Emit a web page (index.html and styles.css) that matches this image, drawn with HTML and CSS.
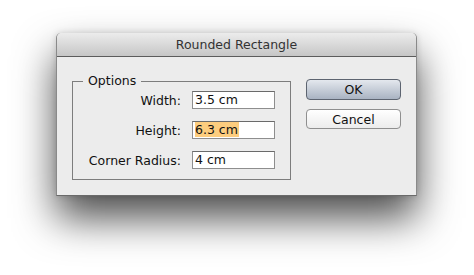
FILE: index.html
```html
<!DOCTYPE html>
<html lang="en">
<head>
    <meta charset="UTF-8">
    <title>Rounded Rectangle</title>
    <link rel="stylesheet" href="styles.css">
</head>
<body>
    <div class="janela">
        <div class="barra-titulo">Rounded Rectangle</div>
        <div class="conteudo">
            <fieldset class="grupo">
                <legend>Options</legend>
                <div class="linha">
                    <label for="largura">Width:</label>
                    <div class="campo" id="largura">3.5 cm</div>
                </div>
                <div class="linha">
                    <label for="altura">Height:</label>
                    <div class="campo" id="altura"><span class="selecao">6.3 cm</span></div>
                </div>
                <div class="linha">
                    <label for="raio">Corner Radius:</label>
                    <div class="campo" id="raio">4 cm</div>
                </div>
            </fieldset>
            <div class="botoes">
                <button class="botao botao-padrao">OK</button>
                <button class="botao">Cancel</button>
            </div>
        </div>
    </div>
</body>
</html>
```

FILE: styles.css
```css
html {
    background-color: #ffffff;
}

body {
    font-family: "DejaVu Sans", sans-serif;
    font-size: 12.5px;
    color: #111;
    margin: 0;
    padding: 33px 0 0 56px;
    min-height: 275px;
    box-sizing: border-box;
}

.janela {
    width: 361px;
    height: 163px;
    box-sizing: border-box;
    background-color: #ececec;
    border: 1px solid #8a8a8a;
    border-top: none;
    border-bottom-color: #6a6a6a;
    border-radius: 5px 5px 0 0;
    box-shadow: 0 22px 40px rgba(0, 0, 0, 0.7), 0 0 6px rgba(0, 0, 0, 0.15);
}

.barra-titulo {
    height: 24px;
    box-sizing: border-box;
    background: linear-gradient(#ececec, #c6c6c6);
    border-bottom: 1px solid #5c5c5c;
    border-radius: 5px 5px 0 0;
    text-align: center;
    line-height: 23px;
    color: #333;
    font-size: 12.5px;
}

.conteudo {
    display: flex;
    padding: 0 0 0 15px;
}

.grupo {
    width: 219px;
    box-sizing: border-box;
    margin: 17px 0 0 0;
    padding: 3px 0 10px 0;
    border: 1px solid #7d7d7d;
    display: flex;
    flex-direction: column;
    gap: 12px;
}

.grupo legend {
    padding: 0 5px;
    margin-left: 10px;
    line-height: 14px;
}

.linha {
    display: flex;
    align-items: center;
    height: 18px;
}

.linha label {
    width: 108px;
    text-align: right;
    margin-right: 11px;
}

.campo {
    width: 83px;
    height: 18px;
    box-sizing: border-box;
    background-color: #fff;
    border: 1px solid #8e8e8e;
    border-top-color: #6a6a6a;
    padding: 0 2px;
    line-height: 16px;
}

.selecao {
    background-color: #fdcd7e;
    padding-right: 1px;
}

.botoes {
    display: flex;
    flex-direction: column;
    gap: 9px;
    margin: 22px 0 0 15px;
}

.botao {
    width: 95px;
    height: 20px;
    font-family: "DejaVu Sans", sans-serif;
    font-size: 12.5px;
    color: #111;
    background: linear-gradient(#ffffff, #ececec);
    border: 1px solid #8f8f8f;
    border-radius: 4px;
    padding: 0;
}

.botao-padrao {
    height: 21px;
    background: linear-gradient(#e4e8ee, #a9b3c2);
    border-color: #5d6470;
}
```
